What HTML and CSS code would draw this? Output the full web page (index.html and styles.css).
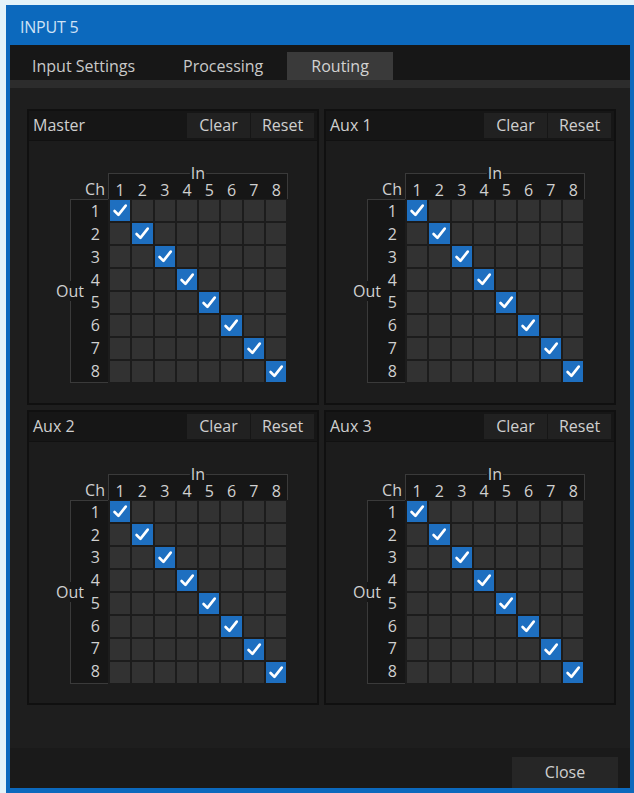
FILE: index.html
```html
<!DOCTYPE html>
<html lang="en">
<head>
<meta charset="utf-8">
<title>INPUT 5</title>
<link rel="stylesheet" href="styles.css">
</head>
<body>
<div class="window">
  <div class="titlebar">INPUT 5</div>
  <div class="inner">
    <div class="tabbar">
      <div class="tab">Input Settings</div>
      <div class="tab">Processing</div>
      <div class="tab active">Routing</div>
    </div>
    <div class="content">
      <div class="panels">

        <section class="panel">
          <div class="phead"><span class="ptitle">Master</span><span class="btn">Clear</span><span class="btn">Reset</span></div>
          <div class="pbody">
            <div class="matrix">
              <div class="ch">Ch</div>
              <div class="inbox"><span class="legend-in">In</span><span>1</span><span>2</span><span>3</span><span>4</span><span>5</span><span>6</span><span>7</span><span>8</span></div>
              <div class="outbox"><span class="legend-out">Out</span><span>1</span><span>2</span><span>3</span><span>4</span><span>5</span><span>6</span><span>7</span><span>8</span></div>
              <div class="cells">
                <i class="on"><svg viewBox="0 0 20 20"><path d="M4.5 10.5 L8.3 14.3 L15.5 5.2"/></svg></i><i></i><i></i><i></i><i></i><i></i><i></i><i></i>
                <i></i><i class="on"><svg viewBox="0 0 20 20"><path d="M4.5 10.5 L8.3 14.3 L15.5 5.2"/></svg></i><i></i><i></i><i></i><i></i><i></i><i></i>
                <i></i><i></i><i class="on"><svg viewBox="0 0 20 20"><path d="M4.5 10.5 L8.3 14.3 L15.5 5.2"/></svg></i><i></i><i></i><i></i><i></i><i></i>
                <i></i><i></i><i></i><i class="on"><svg viewBox="0 0 20 20"><path d="M4.5 10.5 L8.3 14.3 L15.5 5.2"/></svg></i><i></i><i></i><i></i><i></i>
                <i></i><i></i><i></i><i></i><i class="on"><svg viewBox="0 0 20 20"><path d="M4.5 10.5 L8.3 14.3 L15.5 5.2"/></svg></i><i></i><i></i><i></i>
                <i></i><i></i><i></i><i></i><i></i><i class="on"><svg viewBox="0 0 20 20"><path d="M4.5 10.5 L8.3 14.3 L15.5 5.2"/></svg></i><i></i><i></i>
                <i></i><i></i><i></i><i></i><i></i><i></i><i class="on"><svg viewBox="0 0 20 20"><path d="M4.5 10.5 L8.3 14.3 L15.5 5.2"/></svg></i><i></i>
                <i></i><i></i><i></i><i></i><i></i><i></i><i></i><i class="on"><svg viewBox="0 0 20 20"><path d="M4.5 10.5 L8.3 14.3 L15.5 5.2"/></svg></i>
              </div>
            </div>
          </div>
        </section>

        <section class="panel">
          <div class="phead"><span class="ptitle">Aux 1</span><span class="btn">Clear</span><span class="btn">Reset</span></div>
          <div class="pbody">
            <div class="matrix">
              <div class="ch">Ch</div>
              <div class="inbox"><span class="legend-in">In</span><span>1</span><span>2</span><span>3</span><span>4</span><span>5</span><span>6</span><span>7</span><span>8</span></div>
              <div class="outbox"><span class="legend-out">Out</span><span>1</span><span>2</span><span>3</span><span>4</span><span>5</span><span>6</span><span>7</span><span>8</span></div>
              <div class="cells">
                <i class="on"><svg viewBox="0 0 20 20"><path d="M4.5 10.5 L8.3 14.3 L15.5 5.2"/></svg></i><i></i><i></i><i></i><i></i><i></i><i></i><i></i>
                <i></i><i class="on"><svg viewBox="0 0 20 20"><path d="M4.5 10.5 L8.3 14.3 L15.5 5.2"/></svg></i><i></i><i></i><i></i><i></i><i></i><i></i>
                <i></i><i></i><i class="on"><svg viewBox="0 0 20 20"><path d="M4.5 10.5 L8.3 14.3 L15.5 5.2"/></svg></i><i></i><i></i><i></i><i></i><i></i>
                <i></i><i></i><i></i><i class="on"><svg viewBox="0 0 20 20"><path d="M4.5 10.5 L8.3 14.3 L15.5 5.2"/></svg></i><i></i><i></i><i></i><i></i>
                <i></i><i></i><i></i><i></i><i class="on"><svg viewBox="0 0 20 20"><path d="M4.5 10.5 L8.3 14.3 L15.5 5.2"/></svg></i><i></i><i></i><i></i>
                <i></i><i></i><i></i><i></i><i></i><i class="on"><svg viewBox="0 0 20 20"><path d="M4.5 10.5 L8.3 14.3 L15.5 5.2"/></svg></i><i></i><i></i>
                <i></i><i></i><i></i><i></i><i></i><i></i><i class="on"><svg viewBox="0 0 20 20"><path d="M4.5 10.5 L8.3 14.3 L15.5 5.2"/></svg></i><i></i>
                <i></i><i></i><i></i><i></i><i></i><i></i><i></i><i class="on"><svg viewBox="0 0 20 20"><path d="M4.5 10.5 L8.3 14.3 L15.5 5.2"/></svg></i>
              </div>
            </div>
          </div>
        </section>

        <section class="panel">
          <div class="phead"><span class="ptitle">Aux 2</span><span class="btn">Clear</span><span class="btn">Reset</span></div>
          <div class="pbody">
            <div class="matrix">
              <div class="ch">Ch</div>
              <div class="inbox"><span class="legend-in">In</span><span>1</span><span>2</span><span>3</span><span>4</span><span>5</span><span>6</span><span>7</span><span>8</span></div>
              <div class="outbox"><span class="legend-out">Out</span><span>1</span><span>2</span><span>3</span><span>4</span><span>5</span><span>6</span><span>7</span><span>8</span></div>
              <div class="cells">
                <i class="on"><svg viewBox="0 0 20 20"><path d="M4.5 10.5 L8.3 14.3 L15.5 5.2"/></svg></i><i></i><i></i><i></i><i></i><i></i><i></i><i></i>
                <i></i><i class="on"><svg viewBox="0 0 20 20"><path d="M4.5 10.5 L8.3 14.3 L15.5 5.2"/></svg></i><i></i><i></i><i></i><i></i><i></i><i></i>
                <i></i><i></i><i class="on"><svg viewBox="0 0 20 20"><path d="M4.5 10.5 L8.3 14.3 L15.5 5.2"/></svg></i><i></i><i></i><i></i><i></i><i></i>
                <i></i><i></i><i></i><i class="on"><svg viewBox="0 0 20 20"><path d="M4.5 10.5 L8.3 14.3 L15.5 5.2"/></svg></i><i></i><i></i><i></i><i></i>
                <i></i><i></i><i></i><i></i><i class="on"><svg viewBox="0 0 20 20"><path d="M4.5 10.5 L8.3 14.3 L15.5 5.2"/></svg></i><i></i><i></i><i></i>
                <i></i><i></i><i></i><i></i><i></i><i class="on"><svg viewBox="0 0 20 20"><path d="M4.5 10.5 L8.3 14.3 L15.5 5.2"/></svg></i><i></i><i></i>
                <i></i><i></i><i></i><i></i><i></i><i></i><i class="on"><svg viewBox="0 0 20 20"><path d="M4.5 10.5 L8.3 14.3 L15.5 5.2"/></svg></i><i></i>
                <i></i><i></i><i></i><i></i><i></i><i></i><i></i><i class="on"><svg viewBox="0 0 20 20"><path d="M4.5 10.5 L8.3 14.3 L15.5 5.2"/></svg></i>
              </div>
            </div>
          </div>
        </section>

        <section class="panel">
          <div class="phead"><span class="ptitle">Aux 3</span><span class="btn">Clear</span><span class="btn">Reset</span></div>
          <div class="pbody">
            <div class="matrix">
              <div class="ch">Ch</div>
              <div class="inbox"><span class="legend-in">In</span><span>1</span><span>2</span><span>3</span><span>4</span><span>5</span><span>6</span><span>7</span><span>8</span></div>
              <div class="outbox"><span class="legend-out">Out</span><span>1</span><span>2</span><span>3</span><span>4</span><span>5</span><span>6</span><span>7</span><span>8</span></div>
              <div class="cells">
                <i class="on"><svg viewBox="0 0 20 20"><path d="M4.5 10.5 L8.3 14.3 L15.5 5.2"/></svg></i><i></i><i></i><i></i><i></i><i></i><i></i><i></i>
                <i></i><i class="on"><svg viewBox="0 0 20 20"><path d="M4.5 10.5 L8.3 14.3 L15.5 5.2"/></svg></i><i></i><i></i><i></i><i></i><i></i><i></i>
                <i></i><i></i><i class="on"><svg viewBox="0 0 20 20"><path d="M4.5 10.5 L8.3 14.3 L15.5 5.2"/></svg></i><i></i><i></i><i></i><i></i><i></i>
                <i></i><i></i><i></i><i class="on"><svg viewBox="0 0 20 20"><path d="M4.5 10.5 L8.3 14.3 L15.5 5.2"/></svg></i><i></i><i></i><i></i><i></i>
                <i></i><i></i><i></i><i></i><i class="on"><svg viewBox="0 0 20 20"><path d="M4.5 10.5 L8.3 14.3 L15.5 5.2"/></svg></i><i></i><i></i><i></i>
                <i></i><i></i><i></i><i></i><i></i><i class="on"><svg viewBox="0 0 20 20"><path d="M4.5 10.5 L8.3 14.3 L15.5 5.2"/></svg></i><i></i><i></i>
                <i></i><i></i><i></i><i></i><i></i><i></i><i class="on"><svg viewBox="0 0 20 20"><path d="M4.5 10.5 L8.3 14.3 L15.5 5.2"/></svg></i><i></i>
                <i></i><i></i><i></i><i></i><i></i><i></i><i></i><i class="on"><svg viewBox="0 0 20 20"><path d="M4.5 10.5 L8.3 14.3 L15.5 5.2"/></svg></i>
              </div>
            </div>
          </div>
        </section>

      </div>
    </div>
    <div class="footer"><div class="close">Close</div></div>
  </div>
</div>
</body>
</html>
```

FILE: styles.css
```css
* { box-sizing: border-box; }

html, body {
  margin: 0;
  padding: 0;
}

body {
  width: 634px;
  height: 793px;
  overflow: hidden;
  background: #e4f3f9;
  font-family: "Open Sans", "Noto Sans", sans-serif;
  font-size: 16px;
  color: #cccccc;
}

.window {
  margin: 5px 0 0 6px;
  width: 628px;
  height: 788px;
  background: #0c69bd;
  padding: 0 4px 5px 4px;
  display: flex;
  flex-direction: column;
}

.titlebar {
  height: 40px;
  flex: none;
  display: flex;
  align-items: center;
  padding: 4px 0 0 10px;
  color: #cfe2f5;
  letter-spacing: -0.2px;
}

.inner {
  flex: 1;
  background: #1a1a1a;
  display: flex;
  flex-direction: column;
}

.tabbar {
  height: 43px;
  flex: none;
  padding-top: 7px;
  display: flex;
  background: #171717;
  border-bottom: 8px solid #2c2c2c;
}

.tab {
  height: 28px;
  line-height: 28px;
  padding: 0 24px;
  color: #c9c9c9;
}

.tab:first-child {
  padding-left: 22px;
}

.tab.active {
  background: #3a3a3a;
  color: #d2d2d2;
}

.content {
  height: 660px;
  flex: none;
  padding: 21px 14px 43px 17px;
  background: #1e1e1e;
}

.panels {
  height: 100%;
  display: grid;
  grid-template-columns: 1fr 1fr;
  grid-template-rows: 1fr 1fr;
  gap: 5px;
}

.panel {
  border: 2px solid #101010;
  background: #1c1c1c;
  display: flex;
  flex-direction: column;
}

.phead {
  height: 30px;
  flex: none;
  display: flex;
  background: #161616;
  border-bottom: 1px solid #111111;
}

.ptitle {
  flex: 1;
  padding-left: 4px;
  line-height: 29px;
  color: #cfcfcf;
}

.btn {
  width: 63px;
  margin: 2px 0;
  background: #212121;
  text-align: center;
  line-height: 25px;
  color: #cfcfcf;
}

.btn + .btn {
  margin-left: 1px;
  margin-right: 3px;
}

.pbody {
  flex: 1;
  padding: 32px 0 0 41px;
}

.matrix {
  display: grid;
  grid-template-columns: 38px 180px;
  grid-template-rows: 26px 184px;
}

.ch {
  text-align: right;
  padding: 7px 3px 0 0;
  line-height: 18px;
  color: #d0d0d0;
}

.inbox {
  position: relative;
  border: 1px solid #3a3a3a;
  border-bottom: 0;
  background: #161616;
  display: grid;
  grid-template-columns: repeat(8, 20.3px);
  column-gap: 2px;
  padding: 7px 0 0 1px;
  line-height: 18px;
  text-align: center;
  color: #d0d0d0;
}

.legend-in {
  position: absolute;
  top: -10px;
  left: 50%;
  transform: translateX(-50%);
  line-height: 18px;
  padding: 0 1px;
  background: linear-gradient(#1c1c1c 50%, #161616 50%);
}

.outbox {
  position: relative;
  border: 1px solid #3a3a3a;
  border-right: 0;
  background: #161616;
  display: grid;
  grid-template-rows: repeat(8, 1fr);
  align-items: center;
  text-align: right;
  padding-right: 8px;
  line-height: 18px;
  color: #d0d0d0;
}

.legend-out {
  position: absolute;
  top: 50%;
  left: -1px;
  transform: translate(-50%, -50%);
  line-height: 18px;
  padding: 1px 0;
  background: linear-gradient(to right, #1c1c1c 50%, #161616 50%);
}

.cells {
  display: grid;
  grid-template-columns: repeat(8, 20.3px);
  grid-template-rows: repeat(8, 21px);
  gap: 2px;
  padding: 1px 0 0 2px;
}

.cells i {
  display: block;
  background: #323232;
}

.cells i.on {
  background: #1e6fc0;
}

.cells svg {
  display: block;
  width: 100%;
  height: 100%;
}

.cells path {
  fill: none;
  stroke: #ffffff;
  stroke-width: 2.6;
  stroke-linecap: round;
  stroke-linejoin: round;
}

.footer {
  flex: 1;
  display: flex;
  justify-content: flex-end;
  align-items: flex-end;
  padding-right: 12px;
  background: #1a1a1a;
}

.close {
  width: 106px;
  height: 31px;
  line-height: 31px;
  text-align: center;
  background: #262626;
  color: #cfcfcf;
}
```
